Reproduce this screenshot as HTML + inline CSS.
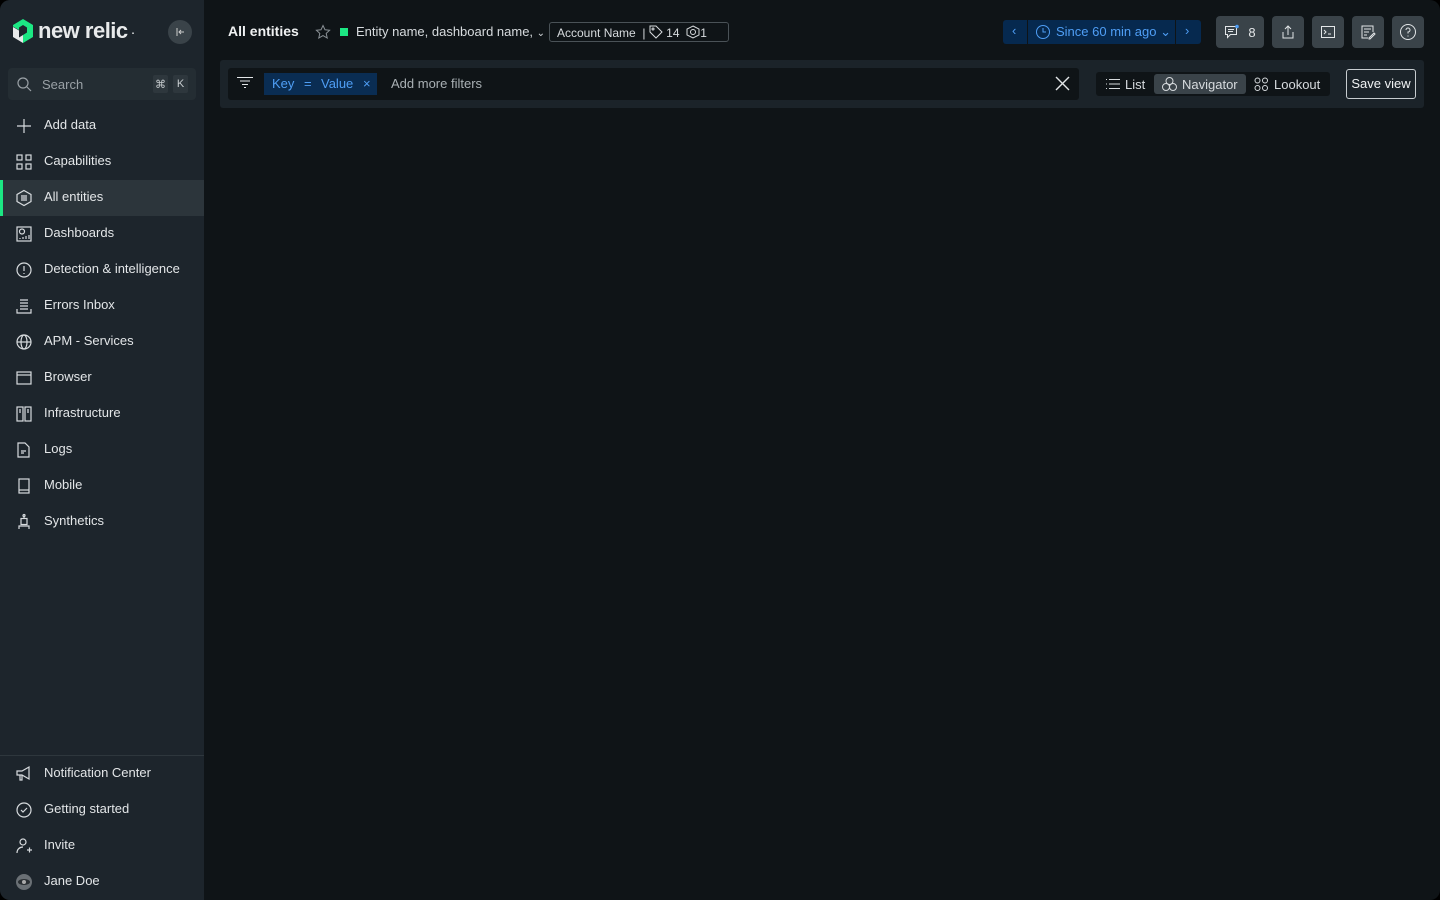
<!DOCTYPE html>
<html><head><meta charset="utf-8"><style>
*{box-sizing:border-box;margin:0;padding:0}
body{width:1440px;height:900px;background:#000;font-family:"Liberation Sans",sans-serif;font-size:13px;color:#e3e6e8;overflow:hidden}
.win{position:absolute;left:0;top:0;width:1440px;height:900px;background:#0f1417;border-radius:10px;overflow:hidden}
.side{position:absolute;left:0;top:0;width:204px;height:900px;background:#1d252c}
.logo{position:absolute;left:12px;top:18px;display:flex;align-items:center;gap:4px;font-size:22px;font-weight:bold;color:#e8eaeb;letter-spacing:-0.5px}
.collapse{position:absolute;left:168px;top:20px;width:24px;height:24px;border-radius:50%;background:#3a4349;display:flex;align-items:center;justify-content:center}
.search{position:absolute;left:8px;top:68px;width:188px;height:32px;background:#242d33;border-radius:4px;display:flex;align-items:center;padding-left:8px;color:#9aa1a6}
.kbd{position:absolute;top:7px;width:15px;height:18px;background:#2e373d;border-radius:2px;font-size:11px;color:#c8cdd0;display:flex;align-items:center;justify-content:center}
.item{position:absolute;left:0;width:204px;height:36px;display:flex;align-items:center}
.item svg{position:absolute;left:15px;top:9px}
.item span{position:absolute;left:44px;top:9px}
.act{background:#2c353b}
.act:before{content:"";position:absolute;left:0;top:0;width:3px;height:36px;background:#1ce783}
.sep{position:absolute;left:0;top:755px;width:204px;height:1px;background:#2e373d}
.title{position:absolute;left:228px;top:23px;font-size:14px;font-weight:bold;color:#f0f2f3}
.panel{position:absolute;left:220px;top:60px;width:1204px;height:48px;background:#1b2329;border-radius:3px}
.input{position:absolute;left:228px;top:68px;width:851px;height:32px;background:#0f1417;border-radius:3px}
.chip{position:absolute;left:264px;top:73px;width:113px;height:22px;background:#0a2d53;color:#4f9ef5;font-size:13px}
.seg{position:absolute;left:1096px;top:72px;width:234px;height:24px;background:#0f1417;border-radius:3px}
.btn{position:absolute;top:16px;height:32px;background:#3a4349;border-radius:4px;display:flex;align-items:center;justify-content:center}
</style></head><body><div class="win">
<div class="side">
 <div class="logo"><svg width="22" height="26" viewBox="0 0 22 26"><path d="M11 1L21 7v12l-10 6V17l4-2.5v-5L11 7 7 9.5V12L1 8.5V7z" fill="#1ce783"/><path d="M1 9l6 3.5v7L11 17v8L1 19z" fill="#e8eaeb"/></svg>new relic<span style="font-size:10px">.</span></div>
 <div class="collapse"><svg width="10" height="10" viewBox="0 0 10 10" stroke="#ccc" fill="none"><path d="M2 1v8M9 5H4M6 3L4 5l2 2"/></svg></div>
 <div class="search"><svg width="16" height="16" viewBox="0 0 16 16" fill="none" stroke="#9aa1a6" stroke-width="1.2"><circle cx="7" cy="7" r="5"/><path d="M11 11l4 4"/></svg><span style="margin-left:10px">Search</span><div class="kbd" style="left:145px">⌘</div><div class="kbd" style="left:165px">K</div></div>
 <div class="item" style="top:108px"><svg width="18" height="18" viewBox="0 0 18 18" stroke="#d7dbde" fill="none" stroke-width="1.2"><path d="M9 2v14M2 9h14"/></svg><span>Add data</span></div>
 <div class="item" style="top:144px"><svg width="18" height="18" viewBox="0 0 18 18" stroke="#d7dbde" fill="none" stroke-width="1.2"><rect x="2" y="2" width="5" height="5"/><rect x="11" y="2" width="5" height="5"/><rect x="2" y="11" width="5" height="5"/><rect x="11" y="11" width="5" height="5"/></svg><span>Capabilities</span></div>
 <div class="item act" style="top:180px"><svg width="18" height="18" viewBox="0 0 18 18" stroke="#d7dbde" fill="none" stroke-width="1.2"><path d="M9 1.5l7 4v7l-7 4-7-4v-7z"/><path d="M6 7h6M6 9h6M6 11h6"/></svg><span>All entities</span></div>
 <div class="item" style="top:216px"><svg width="18" height="18" viewBox="0 0 18 18" stroke="#d7dbde" fill="none" stroke-width="1.2"><rect x="2" y="2" width="14" height="14"/><circle cx="7" cy="6.5" r="2.5"/><path d="M5 14v-1M8 14v-2M11 14v-3M14 14v-4"/></svg><span>Dashboards</span></div>
 <div class="item" style="top:252px"><svg width="18" height="18" viewBox="0 0 18 18" stroke="#d7dbde" fill="none" stroke-width="1.2"><circle cx="9" cy="9" r="7"/><path d="M9 5v5M9 12v1"/></svg><span>Detection &amp; intelligence</span></div>
 <div class="item" style="top:288px"><svg width="18" height="18" viewBox="0 0 18 18" stroke="#d7dbde" fill="none" stroke-width="1.2"><path d="M5 3h8M5 6h8M5 9h8M5 12h8M2 12v4h14v-4"/></svg><span>Errors Inbox</span></div>
 <div class="item" style="top:324px"><svg width="18" height="18" viewBox="0 0 18 18" stroke="#d7dbde" fill="none" stroke-width="1.2"><circle cx="9" cy="9" r="7"/><ellipse cx="9" cy="9" rx="3" ry="7"/><path d="M2 9h14"/></svg><span>APM - Services</span></div>
 <div class="item" style="top:360px"><svg width="18" height="18" viewBox="0 0 18 18" stroke="#d7dbde" fill="none" stroke-width="1.2"><rect x="2" y="3" width="14" height="12"/><path d="M2 6h14"/></svg><span>Browser</span></div>
 <div class="item" style="top:396px"><svg width="18" height="18" viewBox="0 0 18 18" stroke="#d7dbde" fill="none" stroke-width="1.2"><rect x="2" y="2" width="6" height="14"/><rect x="10" y="2" width="6" height="14"/><path d="M4 5h2M4 7h2M12 5h2M12 7h2"/></svg><span>Infrastructure</span></div>
 <div class="item" style="top:432px"><svg width="18" height="18" viewBox="0 0 18 18" stroke="#d7dbde" fill="none" stroke-width="1.2"><path d="M3 2h7l4 4v10H3z"/><path d="M6 10h5M6 12h3"/></svg><span>Logs</span></div>
 <div class="item" style="top:468px"><svg width="18" height="18" viewBox="0 0 18 18" stroke="#d7dbde" fill="none" stroke-width="1.2"><rect x="4" y="2" width="10" height="14"/><path d="M4 13h10"/></svg><span>Mobile</span></div>
 <div class="item" style="top:504px"><svg width="18" height="18" viewBox="0 0 18 18" stroke="#d7dbde" fill="none" stroke-width="1.2"><circle cx="9" cy="2.5" r="1"/><path d="M9 3.5v2"/><rect x="6" y="5.5" width="6" height="6"/><path d="M4 16v-3h10v3"/></svg><span>Synthetics</span></div>
 <div class="sep"></div>
 <div class="item" style="top:756px"><svg width="18" height="18" viewBox="0 0 18 18" stroke="#d7dbde" fill="none" stroke-width="1.2"><path d="M2 6h5l7-4v12l-7-4H2zM5 10v5h2v-5"/></svg><span>Notification Center</span></div>
 <div class="item" style="top:792px"><svg width="18" height="18" viewBox="0 0 18 18" stroke="#d7dbde" fill="none" stroke-width="1.2"><circle cx="9" cy="9" r="7"/><path d="M6 9l2 2 4-4"/></svg><span>Getting started</span></div>
 <div class="item" style="top:828px"><svg width="18" height="18" viewBox="0 0 18 18" stroke="#d7dbde" fill="none" stroke-width="1.2"><circle cx="8" cy="5" r="3"/><path d="M2 16c0-4 3-6 6-6M12 13h5M14.5 10.5v5"/></svg><span>Invite</span></div>
 <div class="item" style="top:864px"><svg width="18" height="18" viewBox="0 0 18 18"><circle cx="9" cy="9" r="8" fill="#6a7075"/><ellipse cx="9" cy="9" rx="6" ry="3" fill="#2a2f33"/><circle cx="9" cy="9" r="2" fill="#aaa"/></svg><span>Jane Doe</span></div>
</div>
<div class="title">All entities</div>
<svg style="position:absolute;left:315px;top:24px" width="16" height="16" viewBox="0 0 16 16" fill="none" stroke="#8a9196"><path d="M8 1.5l2 4.3 4.6.5-3.4 3.1 1 4.6L8 11.6 3.8 14l1-4.6L1.4 6.3 6 5.8z"/></svg>
<div style="position:absolute;left:340px;top:28px;width:8px;height:8px;background:#1ce783"></div>
<div style="position:absolute;left:356px;top:24px;color:#d7dbde">Entity name, dashboard name, <span style="font-size:10px">⌄</span></div>
<div style="position:absolute;left:549px;top:22px;width:180px;height:20px;border:1px solid #4a5257;border-radius:3px;color:#d7dbde;font-size:12px;padding:2px 0 0 7px;white-space:nowrap">Account Name &nbsp;| <svg width="14" height="14" viewBox="0 0 14 14" fill="none" stroke="#d7dbde" style="vertical-align:-2px"><path d="M1 7V1h6l6 6-6 6z"/><circle cx="4" cy="4" r="1"/></svg> 14 &nbsp;<svg width="14" height="14" viewBox="0 0 14 14" fill="none" stroke="#d7dbde" style="vertical-align:-2px"><path d="M7 1l6 3v6l-6 3-6-3V4z"/><circle cx="7" cy="7" r="2.5"/></svg>1</div>
<div style="position:absolute;left:1003px;top:20px;width:198px;height:24px;background:#06294f;border-radius:3px;color:#4f9ef5;font-size:13px">
 <span style="position:absolute;left:9px;top:3px">‹</span><div style="position:absolute;left:24px;top:0;width:1px;height:24px;background:#0f1417"></div>
 <svg style="position:absolute;left:32px;top:4px" width="16" height="16" viewBox="0 0 16 16" fill="none" stroke="#4f9ef5"><circle cx="8" cy="8" r="6.5"/><path d="M8 4v4h3"/></svg>
 <span style="position:absolute;left:53px;top:4px">Since 60 min ago ⌄</span>
 <div style="position:absolute;left:172px;top:0;width:1px;height:24px;background:#0f1417"></div><span style="position:absolute;left:182px;top:3px">›</span></div>
<div class="btn" style="left:1216px;width:48px"><svg width="16" height="16" viewBox="0 0 16 16" fill="none" stroke="#e3e6e8"><path d="M1.5 2.5h11v8h-6l-3 3v-3h-2z"/><path d="M4 5.5h6M4 7.5h5"/><circle cx="13" cy="2.5" r="1.8" fill="#4f9ef5" stroke="none"/></svg><span style="margin-left:8px">8</span></div>
<div class="btn" style="left:1272px;width:32px"><svg width="16" height="16" viewBox="0 0 16 16" fill="none" stroke="#e3e6e8"><path d="M8 2v9M5 5l3-3 3 3M3 8v6h10V8"/></svg></div>
<div class="btn" style="left:1312px;width:32px"><svg width="16" height="16" viewBox="0 0 16 16" fill="none" stroke="#e3e6e8"><rect x="1.5" y="2.5" width="13" height="11"/><path d="M4 6l2 2-2 2M8 10h3"/></svg></div>
<div class="btn" style="left:1352px;width:32px"><svg width="16" height="16" viewBox="0 0 16 16" fill="none" stroke="#e3e6e8"><path d="M8 14H2V2h11v6M4 5h7M4 8h5M4 11h3M9 14l5-5 1 1-5 5h-1z"/></svg></div>
<div class="btn" style="left:1392px;width:32px"><svg width="18" height="18" viewBox="0 0 18 18" fill="none" stroke="#e3e6e8"><circle cx="9" cy="9" r="7.5"/><path d="M7 7a2 2 0 1 1 2 2v1.5M9 12.5v1"/></svg></div>
<div class="panel"></div>
<div class="input"></div>
<svg style="position:absolute;left:236px;top:76px" width="18" height="12" viewBox="0 0 18 12" stroke="#e3e6e8"><path d="M1 1.5h16M4 5h10M6 8.5h6M8 11.5h2"/></svg>
<div class="chip"><span style="position:absolute;left:8px;top:3px">Key</span><span style="position:absolute;left:40px;top:3px">=</span><span style="position:absolute;left:57px;top:3px">Value</span><span style="position:absolute;left:99px;top:3px">×</span></div>
<div style="position:absolute;left:391px;top:76px;color:#a9b0b4">Add more filters</div>
<svg style="position:absolute;left:1055px;top:76px" width="15" height="15" viewBox="0 0 15 15" stroke="#e3e6e8" stroke-width="1.4"><path d="M1 1l13 13M14 1L1 14"/></svg>
<div class="seg">
 <svg style="position:absolute;left:10px;top:6px" width="14" height="12" viewBox="0 0 14 12" stroke="#d7dbde"><path d="M0 1.5h1M3 1.5h11M0 6h1M3 6h11M0 10.5h1M3 10.5h11"/></svg>
 <span style="position:absolute;left:29px;top:5px;color:#d7dbde">List</span>
 <div style="position:absolute;left:58px;top:2px;width:92px;height:20px;background:#3a4349;border-radius:3px"></div>
 <svg style="position:absolute;left:65px;top:4px" width="17" height="16" viewBox="0 0 17 16" fill="none" stroke="#d7dbde"><circle cx="8.5" cy="5" r="3.5"/><circle cx="5" cy="11" r="3.5"/><circle cx="12" cy="11" r="3.5"/></svg>
 <span style="position:absolute;left:86px;top:5px;color:#d7dbde">Navigator</span>
 <svg style="position:absolute;left:158px;top:5px" width="15" height="15" viewBox="0 0 15 15" fill="none" stroke="#d7dbde"><circle cx="3.5" cy="3.5" r="2.5"/><circle cx="11" cy="3.5" r="2.5"/><circle cx="3.5" cy="11" r="2.5"/><circle cx="11" cy="11" r="2.5"/></svg>
 <span style="position:absolute;left:178px;top:5px;color:#d7dbde">Lookout</span>
</div>
<div style="position:absolute;left:1346px;top:69px;width:70px;height:30px;border:1px solid #c8cdd0;border-radius:3px;color:#f0f2f3;font-size:13px;text-align:center;line-height:28px">Save view</div>
</div></body></html>
